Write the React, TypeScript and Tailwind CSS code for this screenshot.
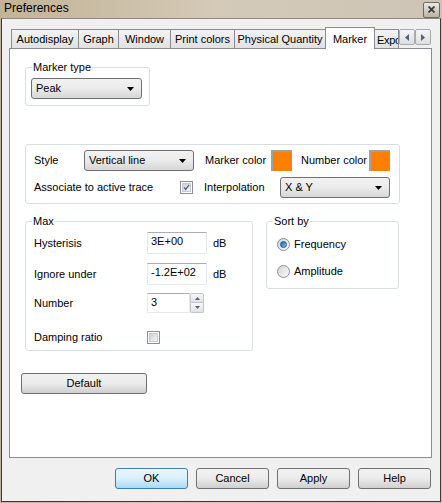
import React from 'react';

const font = "[font-family:'Liberation_Sans',Arial,sans-serif]";

function Arrow() {
    return (
        <svg width="7" height="4" viewBox="0 0 7 4" className="shrink-0">
            <path d="M0 0 H7 L3.5 4 Z" fill="#000" />
        </svg>
    );
}

function Combo({ value, width }: { value: string; width: string }) {
    return (
        <div
            className={`${width} h-[21px] flex items-center justify-between pl-[4px] pr-[7px] border border-[#707070] rounded-[3px] bg-gradient-to-b from-[#f2f2f2] via-[#ebebeb] to-[#d6d6d6]`}
        >
            <span>{value}</span>
            <Arrow />
        </div>
    );
}

function GroupBox({ label, className, children }: { label: string; className: string; children: React.ReactNode }) {
    return (
        <div className={`relative border border-[#d5dfe5] rounded-[3px] ${className}`}>
            {label && <span className="absolute -top-[7px] left-[6px] bg-white px-[1px] leading-[13px]">{label}</span>}
            {children}
        </div>
    );
}

function TextBox({ value, width, height }: { value: string; width: string; height: string }) {
    return (
        <div
            className={`${width} ${height} bg-white border border-[#e3e9ef] border-t-[#abadb3] pl-[3px] pt-[2px] leading-[13px]`}
        >
            {value}
        </div>
    );
}

function CheckBox({ checked }: { checked?: boolean }) {
    return (
        <div className="w-[13px] h-[13px] border border-[#8e8f8f] bg-white p-[1px] shrink-0">
            <div className="w-full h-full bg-gradient-to-br from-[#cbcfd5] to-[#f6f6f6] border border-[#c7c9cc] flex items-center justify-center">
                {checked && (
                    <svg width="9" height="9" viewBox="0 0 9 9">
                        <path d="M1.5 4.5 L3.5 7 L7.8 1.2" stroke="#4a5f97" strokeWidth="1.6" fill="none" />
                    </svg>
                )}
            </div>
        </div>
    );
}

function Radio({ checked }: { checked?: boolean }) {
    return (
        <div className="w-[13px] h-[13px] rounded-full border border-[#8e8f8f] bg-gradient-to-br from-[#d1d3d6] to-[#fdfdfd] flex items-center justify-center shrink-0">
            {checked && (
                <div className="w-[7px] h-[7px] rounded-full bg-gradient-to-br from-[#1b5fb0] to-[#7ec3f3] border border-[#245a9c]" />
            )}
        </div>
    );
}

function Swatch() {
    return <div className="w-[21px] h-[21px] bg-[#ff8000] border-t-2 border-l-2 border-[#a0a0a0]" />;
}

function Button({ label, primary, width }: { label: string; primary?: boolean; width: string }) {
    return (
        <div
            className={`${width} h-[21px] flex items-center justify-center rounded-[3px] border ${
                primary
                    ? 'border-[#3c7fb1] bg-gradient-to-b from-[#eaf6fd] via-[#d9f0fc] to-[#a7d9f5]'
                    : 'border-[#707070] bg-gradient-to-b from-[#f2f2f2] via-[#ebebeb] to-[#cfcfcf]'
            }`}
        >
            {label}
        </div>
    );
}

const tabs = [
    { label: 'Autodisplay', w: 'w-[68px]' },
    { label: 'Graph', w: 'w-[41px]' },
    { label: 'Window', w: 'w-[53px]' },
    { label: 'Print colors', w: 'w-[65px]' },
    { label: 'Physical Quantity', w: 'w-[92px]' },
];

export default function App() {
    return (
        <div className={`w-[442px] h-[503px] bg-gradient-to-r from-[#c3b396] via-[#d4cab8] to-[#cdc4b6] text-[11px] text-black ${font}`}>
            {/* Title bar */}
            <div className="h-[18px] flex items-center justify-between pl-[4px] pr-[2px]">
                <span className="text-[12px] leading-[14px] -mt-[2px]">Preferences</span>
                <div className="w-[17px] h-[16px] mt-[1px] rounded-[2px] border border-[#6f6a60] bg-gradient-to-b from-[#eceae4] to-[#b9b3a7] flex items-center justify-center">
                    <svg width="7" height="7" viewBox="0 0 7 7">
                        <path d="M0.5 0.5 L6.5 6.5 M6.5 0.5 L0.5 6.5" stroke="#3c3c3c" strokeWidth="1.8" />
                    </svg>
                </div>
            </div>

            {/* Client area */}
            <div className="mx-[1px] h-[484px] border border-[#3a3a3a] border-t-[#8f8a80] bg-[#f0f0f0]">
                <div className="ml-[7px] w-[423px] pt-[8px]">
                    {/* Tab strip */}
                    <div className="relative z-10 flex items-end h-[21px] pl-[2px]">
                        {tabs.map((t) => (
                            <div
                                key={t.label}
                                className={`${t.w} -mr-px h-[19px] flex items-center justify-center border border-b-0 border-[#898c95] bg-gradient-to-b from-[#f3f3f3] to-[#e1e1e1]`}
                            >
                                {t.label}
                            </div>
                        ))}
                        <div className="w-[50px] -mr-px h-[22px] -mb-px flex justify-center pt-[3px] border border-b-0 border-[#898c95] bg-white">
                            Marker
                        </div>
                        <div className="w-[25px] h-[19px] overflow-hidden border border-b-0 border-[#898c95] bg-gradient-to-b from-[#f3f3f3] to-[#e1e1e1] pl-[2px] pt-[2px] whitespace-nowrap tracking-[-0.3px]">
                            Expo
                        </div>
                        <div className="flex self-start mt-[2px] bg-[#f0f0f0]">
                            <div className="w-[16px] h-[16px] border border-[#a6abb3] rounded-[2px] bg-gradient-to-b from-[#f5f5f5] to-[#dedede] flex items-center justify-center">
                                <svg width="4" height="7" viewBox="0 0 4 7">
                                    <path d="M4 0 V7 L0 3.5 Z" fill="#4d6185" />
                                </svg>
                            </div>
                            <div className="w-[16px] h-[16px] border border-[#a6abb3] rounded-[2px] bg-gradient-to-b from-[#f5f5f5] to-[#dedede] flex items-center justify-center">
                                <svg width="4" height="7" viewBox="0 0 4 7">
                                    <path d="M0 0 V7 L4 3.5 Z" fill="#4d6185" />
                                </svg>
                            </div>
                        </div>
                    </div>

                    {/* Tab panel */}
                    <div className="h-[410px] border border-[#898c95] bg-white pl-[15px] pt-[18px]">
                        <GroupBox label="Marker type" className="w-[125px] h-[39px] pl-[5px] pt-[10px]">
                            <Combo value="Peak" width="w-[111px]" />
                        </GroupBox>

                        <GroupBox label="" className="mt-[38px] w-[375px] h-[60px] pl-[8px] pt-[5px]">
                            <div className="flex items-center h-[21px]">
                                <span className="w-[50px]">Style</span>
                                <Combo value="Vertical line" width="w-[110px]" />
                                <span className="ml-[11px] w-[66px]">Marker color</span>
                                <Swatch />
                                <span className="ml-[9px] w-[68px]">Number color</span>
                                <Swatch />
                            </div>
                            <div className="flex items-center h-[21px] mt-[6px]">
                                <span className="w-[146px]">Associate to active trace</span>
                                <CheckBox checked />
                                <span className="ml-[11px] w-[76px]">Interpolation</span>
                                <Combo value="X & Y" width="w-[110px]" />
                            </div>
                        </GroupBox>

                        <div className="flex items-start mt-[17px]">
                            <GroupBox label="Max" className="w-[228px] h-[130px] pl-[8px] pt-[10px]">
                                <div className="flex items-center">
                                    <span className="w-[113px]">Hysterisis</span>
                                    <TextBox value="3E+00" width="w-[60px]" height="h-[22px]" />
                                    <span className="ml-[6px]">dB</span>
                                </div>
                                <div className="flex items-center mt-[9px]">
                                    <span className="w-[113px]">Ignore under</span>
                                    <TextBox value="-1.2E+02" width="w-[60px]" height="h-[22px]" />
                                    <span className="ml-[6px]">dB</span>
                                </div>
                                <div className="flex items-center mt-[8px]">
                                    <span className="w-[113px]">Number</span>
                                    <TextBox value="3" width="w-[43px]" height="h-[20px]" />
                                    <div className="flex flex-col w-[14px] h-[20px]">
                                        <div className="h-[10px] border border-[#c2c7cf] rounded-t-[2px] bg-gradient-to-b from-[#f7f7f7] to-[#e2e2e2] flex items-center justify-center">
                                            <svg width="5" height="3" viewBox="0 0 5 3">
                                                <path d="M0 3 H5 L2.5 0 Z" fill="#4d6185" />
                                            </svg>
                                        </div>
                                        <div className="h-[10px] border border-t-0 border-[#c2c7cf] rounded-b-[2px] bg-gradient-to-b from-[#f7f7f7] to-[#e2e2e2] flex items-center justify-center">
                                            <svg width="5" height="3" viewBox="0 0 5 3">
                                                <path d="M0 0 H5 L2.5 3 Z" fill="#4d6185" />
                                            </svg>
                                        </div>
                                    </div>
                                </div>
                                <div className="flex items-center mt-[16px]">
                                    <span className="w-[113px]">Damping ratio</span>
                                    <CheckBox />
                                </div>
                            </GroupBox>

                            <GroupBox label="Sort by" className="ml-[13px] w-[133px] h-[68px] pl-[10px] pt-[16px]">
                                <div className="flex items-center gap-[4px] h-[13px]">
                                    <Radio checked />
                                    <span>Frequency</span>
                                </div>
                                <div className="flex items-center gap-[4px] h-[13px] mt-[14px]">
                                    <Radio />
                                    <span>Amplitude</span>
                                </div>
                            </GroupBox>
                        </div>

                        <div className="-ml-[4px] mt-[22px]">
                            <Button label="Default" width="w-[126px]" />
                        </div>
                    </div>

                    {/* Dialog buttons */}
                    <div className="flex justify-end gap-[8px] mt-[10px] pr-px">
                        <Button label="OK" primary width="w-[73px]" />
                        <Button label="Cancel" width="w-[73px]" />
                        <Button label="Apply" width="w-[73px]" />
                        <Button label="Help" width="w-[73px]" />
                    </div>
                </div>
            </div>
        </div>
    );
}
